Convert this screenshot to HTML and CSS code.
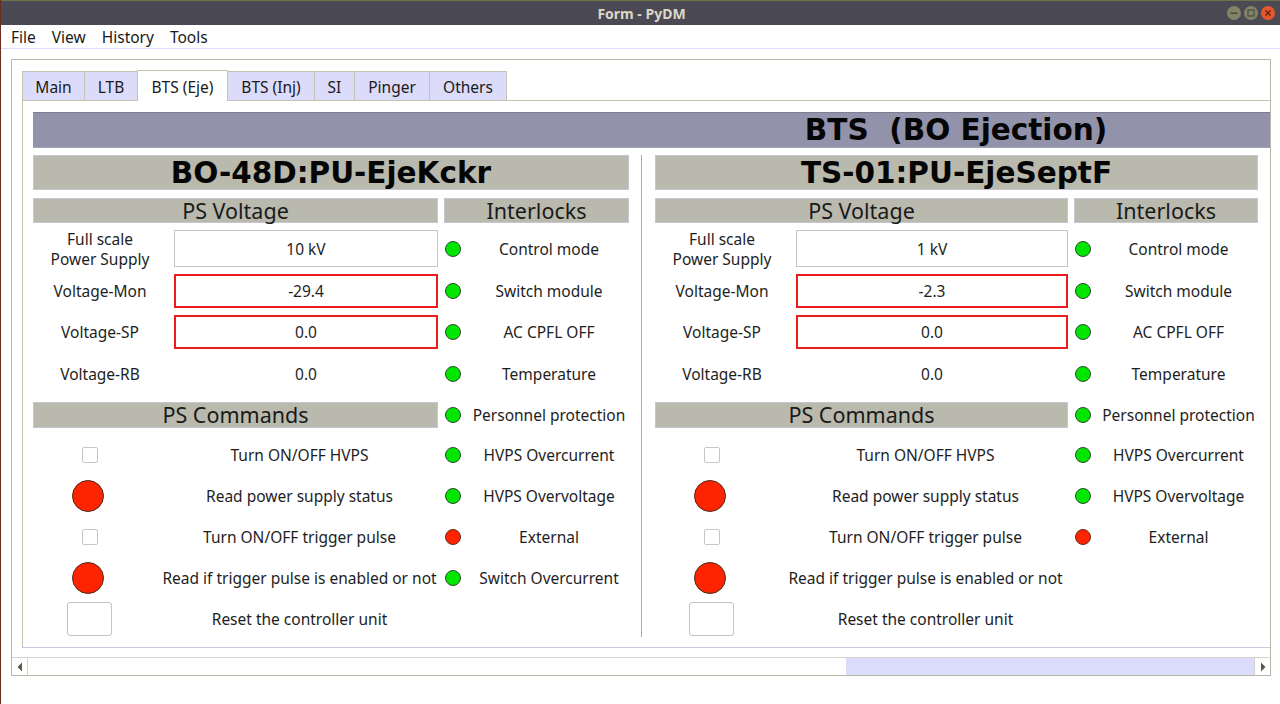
FILE: index.html
```html
<!DOCTYPE html>
<html>
<head>
<meta charset="utf-8">
<title>Form - PyDM</title>
<link rel="stylesheet" href="styles.css">
</head>
<body>
<div class="window">
  <div class="titlebar">
    <span class="title">Form - PyDM</span>
    <div class="wbtns">
      <span class="wbtn wmin"><svg width="14" height="14" viewBox="0 0 14 14"><rect x="3.5" y="6.5" width="7" height="1.5" fill="#4a4a3a"/></svg></span>
      <span class="wbtn wmax"><svg width="14" height="14" viewBox="0 0 14 14"><rect x="4" y="4" width="6" height="6" fill="none" stroke="#4a4a3a" stroke-width="1.2"/></svg></span>
      <span class="wbtn wclose"><svg width="14" height="14" viewBox="0 0 14 14"><path d="M4.5 4.5 L9.5 9.5 M9.5 4.5 L4.5 9.5" stroke="#5a2010" stroke-width="1.3"/></svg></span>
    </div>
  </div>
  <div class="menubar">
    <span class="menu">File</span>
    <span class="menu">View</span>
    <span class="menu">History</span>
    <span class="menu">Tools</span>
  </div>
  <div class="client">
    <div class="scrollarea">
      <div class="viewport">
        <div class="tabwidget">
          <div class="tabbar">
            <span class="tab t-main">Main</span>
            <span class="tab t-ltb">LTB</span>
            <span class="tab t-eje active">BTS (Eje)</span>
            <span class="tab t-inj">BTS (Inj)</span>
            <span class="tab t-si">SI</span>
            <span class="tab t-pinger">Pinger</span>
            <span class="tab t-others">Others</span>
          </div>
          <div class="pane">
            <div class="mainheader">BTS&nbsp;&nbsp;(BO Ejection)</div>
            <div class="panels">
              <section class="panel panel-left">
                <div class="ptitle">BO-48D:PU-EjeKckr</div>
                <div class="pbody">
                  <div class="sect">PS Voltage</div>
                  <div class="sect">Interlocks</div>

                  <div class="vrow"><span class="lbl lbl2"><span>Full scale</span><span>Power Supply</span></span><span class="vbox">10 kV</span></div>
                  <div class="ilk"><span class="led on"></span><span class="ilbl">Control mode</span></div>

                  <div class="vrow"><span class="lbl">Voltage-Mon</span><span class="vbox alarm">-29.4</span></div>
                  <div class="ilk"><span class="led on"></span><span class="ilbl">Switch module</span></div>

                  <div class="vrow"><span class="lbl">Voltage-SP</span><span class="vbox alarm">0.0</span></div>
                  <div class="ilk"><span class="led on"></span><span class="ilbl">AC CPFL OFF</span></div>

                  <div class="vrow"><span class="lbl">Voltage-RB</span><span class="vtxt">0.0</span></div>
                  <div class="ilk"><span class="led on"></span><span class="ilbl">Temperature</span></div>

                  <div class="cmdhead"><span class="sect">PS Commands</span></div>
                  <div class="ilk"><span class="led on"></span><span class="ilbl">Personnel protection</span></div>

                  <div class="crow"><span class="ind"><span class="chk"></span></span><span class="ctxt">Turn ON/OFF HVPS</span></div>
                  <div class="ilk"><span class="led on"></span><span class="ilbl">HVPS Overcurrent</span></div>

                  <div class="crow"><span class="ind"><span class="bigled"></span></span><span class="ctxt">Read power supply status</span></div>
                  <div class="ilk"><span class="led on"></span><span class="ilbl">HVPS Overvoltage</span></div>

                  <div class="crow"><span class="ind"><span class="chk"></span></span><span class="ctxt">Turn ON/OFF trigger pulse</span></div>
                  <div class="ilk"><span class="led off"></span><span class="ilbl">External</span></div>

                  <div class="crow"><span class="ind"><span class="bigled"></span></span><span class="ctxt">Read if trigger pulse is enabled or not</span></div>
                  <div class="ilk"><span class="led on"></span><span class="ilbl">Switch Overcurrent</span></div>

                  <div class="crow"><span class="ind"><span class="pbtn"></span></span><span class="ctxt">Reset the controller unit</span></div>
                  <div class="ilk"></div>
                </div>
              </section>
              <div class="vsep"></div>
              <section class="panel panel-right">
                <div class="ptitle">TS-01:PU-EjeSeptF</div>
                <div class="pbody">
                  <div class="sect">PS Voltage</div>
                  <div class="sect">Interlocks</div>

                  <div class="vrow"><span class="lbl lbl2"><span>Full scale</span><span>Power Supply</span></span><span class="vbox">1 kV</span></div>
                  <div class="ilk"><span class="led on"></span><span class="ilbl">Control mode</span></div>

                  <div class="vrow"><span class="lbl">Voltage-Mon</span><span class="vbox alarm">-2.3</span></div>
                  <div class="ilk"><span class="led on"></span><span class="ilbl">Switch module</span></div>

                  <div class="vrow"><span class="lbl">Voltage-SP</span><span class="vbox alarm">0.0</span></div>
                  <div class="ilk"><span class="led on"></span><span class="ilbl">AC CPFL OFF</span></div>

                  <div class="vrow"><span class="lbl">Voltage-RB</span><span class="vtxt">0.0</span></div>
                  <div class="ilk"><span class="led on"></span><span class="ilbl">Temperature</span></div>

                  <div class="cmdhead"><span class="sect">PS Commands</span></div>
                  <div class="ilk"><span class="led on"></span><span class="ilbl">Personnel protection</span></div>

                  <div class="crow"><span class="ind"><span class="chk"></span></span><span class="ctxt">Turn ON/OFF HVPS</span></div>
                  <div class="ilk"><span class="led on"></span><span class="ilbl">HVPS Overcurrent</span></div>

                  <div class="crow"><span class="ind"><span class="bigled"></span></span><span class="ctxt">Read power supply status</span></div>
                  <div class="ilk"><span class="led on"></span><span class="ilbl">HVPS Overvoltage</span></div>

                  <div class="crow"><span class="ind"><span class="chk"></span></span><span class="ctxt">Turn ON/OFF trigger pulse</span></div>
                  <div class="ilk"><span class="led off"></span><span class="ilbl">External</span></div>

                  <div class="crow"><span class="ind"><span class="bigled"></span></span><span class="ctxt">Read if trigger pulse is enabled or not</span></div>
                  <div class="ilk"></div>

                  <div class="crow"><span class="ind"><span class="pbtn"></span></span><span class="ctxt">Reset the controller unit</span></div>
                  <div class="ilk"></div>
                </div>
              </section>
            </div>
          </div>
        </div>
      </div>
      <div class="hscroll">
        <span class="sbtn"><svg width="6" height="10" viewBox="0 0 6 10"><path d="M5 0.5 L0.5 5 L5 9.5 Z" fill="#5a5a4c"/></svg></span>
        <span class="sthumb"></span>
        <span class="strack"></span>
        <span class="sbtn sbtn-r"><svg width="6" height="10" viewBox="0 0 6 10"><path d="M1 0.5 L5.5 5 L1 9.5 Z" fill="#5a5a4c"/></svg></span>
      </div>
    </div>
  </div>
</div>
</body>
</html>
```
FILE: styles.css
```css
* { box-sizing: border-box; }
html, body { margin: 0; padding: 0; background: #ffffff; }
body {
  width: 1280px;
  height: 704px;
  overflow: hidden;
  font-family: "Noto Sans", "DejaVu Sans", sans-serif;
  font-size: 15.5px;
  color: #1e1e1e;
}
.window {
  height: 704px;
  border-left: 1px solid #6a2e1e;
  background: #ffffff;
}
.titlebar {
  height: 25px;
  background: #4a4954;
  border-top: 1px solid #6e7346;
  display: flex;
  align-items: center;
  justify-content: center;
  position: relative;
}
.title {
  font-family: "Noto Sans", sans-serif;
  font-weight: bold;
  font-size: 14px;
  color: #dcd8c6;
  margin-left: 2px;
}
.wbtns {
  position: absolute;
  right: 5px;
  top: 5px;
  display: flex;
  gap: 3px;
}
.wbtn {
  width: 14px;
  height: 14px;
  border-radius: 50%;
  display: flex;
}
.wmin, .wmax { background: #83836a; }
.wclose { background: #e6582c; }
.menubar {
  height: 24px;
  border-bottom: 1px solid #dcdcff;
  display: flex;
  align-items: center;
  padding-left: 2px;
  font-size: 15.5px;
}
.menu { padding: 0 8px; color: #1a1a1a; }
.client {
  padding: 10px 0 0 10px;
}
.scrollarea {
  width: 1260px;
  height: 617px;
  border: 1px solid #b8b8aa;
  display: flex;
  flex-direction: column;
}
.viewport {
  height: 597px;
  overflow: hidden;
  padding: 11px 0 0 10px;
}
.tabwidget { width: 1900px; }
.tabbar {
  display: flex;
  height: 29px;
  align-items: flex-end;
}
.tab {
  height: 29px;
  background: #dcdcfa;
  border: 1px solid #c4c4b4;
  border-bottom: none;
  border-right: none;
  display: flex;
  align-items: center;
  justify-content: center;
  font-size: 15.5px;
  color: #1a1a1a;
  padding-top: 1px;
}
.tab.active {
  background: #ffffff;
  height: 31px;
  margin-bottom: -1px;
  position: relative;
  z-index: 2;
  border-right: 1px solid #c4c4b4;
}
.t-others { border-right: 1px solid #c4c4b4; }
.t-main { width: 62px; }
.t-ltb { width: 53px; }
.t-eje { width: 91px; }
.t-inj { width: 87px; margin-left: -1px; }
.t-si { width: 40px; }
.t-pinger { width: 75px; }
.t-others { width: 78px; }
.pane {
  width: 1900px;
  height: 548px;
  border: 1px solid #c4c4b4;
  border-bottom-color: #c8c8e4;
  padding: 11px 0 0 10px;
}
.mainheader {
  width: 1846px;
  height: 36px;
  background: #9292aa;
  border-top: 1px solid #7c7c92;
  border-bottom: 1px solid #a4a4b8;
  font-family: "DejaVu Sans", sans-serif;
  font-weight: bold;
  font-size: 29.5px;
  color: #050505;
  display: flex;
  align-items: center;
  justify-content: center;
}
.panels {
  display: flex;
  margin-top: 7px;
  height: 482px;
}
.vsep {
  width: 1px;
  background: #a8a8c8;
  margin: 0 13px 0 12px;
}
.panel-left { width: 596px; }
.panel-right { width: 603px; }
.ptitle {
  height: 35px;
  background: #b9b9ad;
  border: 1px solid #c6c6d0;
  font-family: "DejaVu Sans", sans-serif;
  font-weight: bold;
  font-size: 29.5px;
  color: #050505;
  display: flex;
  align-items: center;
  justify-content: center;
  margin-bottom: 8px;
}
.pbody {
  display: grid;
  grid-template-rows: 25px 37px 34px 34px 35px 33px 34px 34px 34px 34px 34px;
  row-gap: 7px;
}
.panel-left .pbody { grid-template-columns: 405px 185px; column-gap: 6px; }
.panel-right .pbody { grid-template-columns: 413px 184px; column-gap: 6px; }
.sect {
  background: #b9b9ad;
  border: 1px solid #c6c6d0;
  display: flex;
  align-items: center;
  justify-content: center;
  font-size: 21.5px;
  color: #1a1a1a;
  height: 100%;
}
.cmdhead {
  display: flex;
  align-items: center;
}
.cmdhead .sect { height: 26px; width: 100%; }
.vrow {
  display: grid;
  grid-template-columns: 134px 1fr;
  grid-template-rows: minmax(0, 1fr);
  column-gap: 7px;
  align-items: stretch;
}
.lbl {
  display: flex;
  align-items: center;
  justify-content: center;
  text-align: center;
  min-height: 0;
}
.lbl2 {
  flex-direction: column;
  line-height: 20px;
}
.lbl2 span { display: block; flex: none; }
.vbox {
  border: 1px solid #c6c6be;
  background: #ffffff;
  display: flex;
  align-items: center;
  justify-content: center;
}
.vbox.alarm { border: 2px solid #ea1c1c; }
.vtxt {
  display: flex;
  align-items: center;
  justify-content: center;
}
.ilk {
  display: grid;
  grid-template-columns: 25px 1fr;
  align-items: center;
}
.led {
  width: 16px;
  height: 16px;
  border-radius: 50%;
  margin-left: 1px;
  border: 1px solid #2e4a2e;
}
.led.on { background: #00e600; }
.led.off { background: #ff2400; border-color: #6a2a1e; }
.ilbl { text-align: center; white-space: nowrap; }
.crow {
  display: grid;
  grid-template-columns: 112px 1fr;
  column-gap: 16px;
  align-items: center;
}
.ind {
  display: flex;
  justify-content: center;
  align-items: center;
}
.ctxt { text-align: center; white-space: nowrap; }
.chk {
  width: 16px;
  height: 16px;
  border: 1px solid #c8c8c0;
  border-radius: 2px;
  background: #ffffff;
  margin-left: 2px;
}
.bigled {
  width: 32px;
  height: 32px;
  border-radius: 50%;
  background: #ff2400;
  border: 1px solid #4e2a22;
  margin-left: -2px;
}
.pbtn {
  width: 45px;
  height: 34px;
  border: 1px solid #c4c4b8;
  border-radius: 3px;
  background: #ffffff;
}
.hscroll {
  height: 18px;
  border-top: 1px solid #d4d4cc;
  display: flex;
}
.sbtn {
  width: 16px;
  display: flex;
  align-items: center;
  justify-content: center;
  border-right: 1px solid #d4d4cc;
}
.sbtn-r { border-right: none; border-left: 1px solid #d4d4cc; }
.sthumb {
  width: 818px;
  background: #ffffff;
}
.strack {
  flex: 1;
  background: #dcdcfc;
}
```
